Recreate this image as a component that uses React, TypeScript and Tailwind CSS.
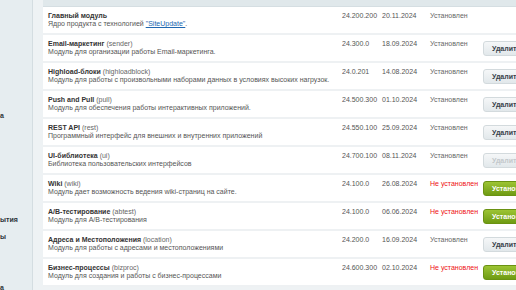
import React from "react";

type Mod = {
  name: string;
  code?: string;
  desc: React.ReactNode;
  ver: string;
  date: string;
  installed: boolean;
  action?: "del" | "del-off" | "install";
};

const mods: Mod[] = [
  {
    name: "Главный модуль",
    desc: (
      <>
        Ядро продукта с технологией{" "}
        <a href="#" className="text-[#2067b0] underline">
          "SiteUpdate"
        </a>
        .
      </>
    ),
    ver: "24.200.200",
    date: "20.11.2024",
    installed: true,
  },
  { name: "Email-маркетинг", code: "sender", desc: "Модуль для организации работы Email-маркетинга.", ver: "24.300.0", date: "18.09.2024", installed: true, action: "del" },
  { name: "Highload-блоки", code: "highloadblock", desc: "Модуль для работы с произвольными наборами данных в условиях высоких нагрузок.", ver: "24.0.201", date: "14.08.2024", installed: true, action: "del" },
  { name: "Push and Pull", code: "pull", desc: "Модуль для обеспечения работы интерактивных приложений.", ver: "24.500.300", date: "01.10.2024", installed: true, action: "del" },
  { name: "REST API", code: "rest", desc: "Программный интерфейс для внешних и внутренних приложений", ver: "24.550.100", date: "25.09.2024", installed: true, action: "del" },
  { name: "UI-библиотека", code: "ui", desc: "Библиотека пользовательских интерфейсов", ver: "24.700.100", date: "08.11.2024", installed: true, action: "del-off" },
  { name: "Wiki", code: "wiki", desc: "Модуль дает возможность ведения wiki-страниц на сайте.", ver: "24.100.0", date: "26.08.2024", installed: false, action: "install" },
  { name: "A/B-тестирование", code: "abtest", desc: "Модуль для A/B-тестирования", ver: "24.100.0", date: "06.06.2024", installed: false, action: "install" },
  { name: "Адреса и Местоположения", code: "location", desc: "Модуль для работы с адресами и местоположениями", ver: "24.200.0", date: "16.09.2024", installed: true, action: "del" },
  { name: "Бизнес-процессы", code: "bizproc", desc: "Модуль для создания и работы с бизнес-процессами", ver: "24.600.300", date: "02.10.2024", installed: false, action: "install" },
];

const Action = ({ a }: { a?: Mod["action"] }) => {
  if (!a) return null;
  if (a === "install")
    return (
      <span className="inline-block h-[15px] px-[8px] leading-[14px] rounded-[3px] border border-[#6a9212] bg-gradient-to-b from-[#9cc433] to-[#6f9b12] text-white font-bold whitespace-nowrap">
        Установить
      </span>
    );
  return (
    <span
      className={
        "inline-block h-[15px] px-[8px] leading-[14px] rounded-[3px] border border-[#d3dadd] bg-gradient-to-b from-[#f5f7f8] to-[#e2e8eb] font-bold whitespace-nowrap " +
        (a === "del-off" ? "text-[#c3c8cb]" : "text-[#39414a]")
      }
    >
      Удалить
    </span>
  );
};

export default function App() {
  return (
    <div
      className="flex w-[516px] h-[290px] overflow-hidden bg-[#eef2f4] text-[7px] text-[#333]"
      style={{ fontFamily: '"Liberation Sans", Arial, sans-serif' }}
    >
      <div className="w-[33px] shrink-0 bg-[#e6edf0] border-r border-[#d4dde1] font-bold text-[#2b3438] overflow-hidden">
        <div className="h-[112px]" />
        <div className="leading-[8px]">а</div>
        <div className="h-[96px]" />
        <div className="leading-[8px]">ытия</div>
        <div className="h-[9px]" />
        <div className="leading-[8px]">ы</div>
        <div className="h-[43px]" />
        <div className="leading-[8px]">а</div>
      </div>
      <div className="flex-1 pl-[10px]">
        <div className="h-[7px] bg-[#e0e8eb] border-b border-[#d5dee2]" />
        <div className="bg-white">
          {mods.map((m) => (
            <div
              key={m.name}
              className="flex h-[28px] border-b-2 border-[#eef1f3] pl-[5px] pt-[5px]"
            >
              <div className="w-[294px] shrink-0 leading-[8px]">
                <div>
                  <span className="font-bold text-[#333]">{m.name}</span>
                  {m.code && <span className="text-[#666]"> ({m.code})</span>}
                </div>
                <div className="text-[#555]">{m.desc}</div>
              </div>
              <div className="w-[40px] shrink-0 leading-[8px] text-[#555]">{m.ver}</div>
              <div className="w-[48px] shrink-0 leading-[8px] text-[#555]">{m.date}</div>
              <div
                className={
                  "w-[53px] shrink-0 leading-[8px] " +
                  (m.installed ? "text-[#666]" : "text-[#ee1111]")
                }
              >
                {m.installed ? "Установлен" : "Не установлен"}
              </div>
              <div className="pt-[1px]">
                <Action a={m.action} />
              </div>
            </div>
          ))}
        </div>
      </div>
    </div>
  );
}
